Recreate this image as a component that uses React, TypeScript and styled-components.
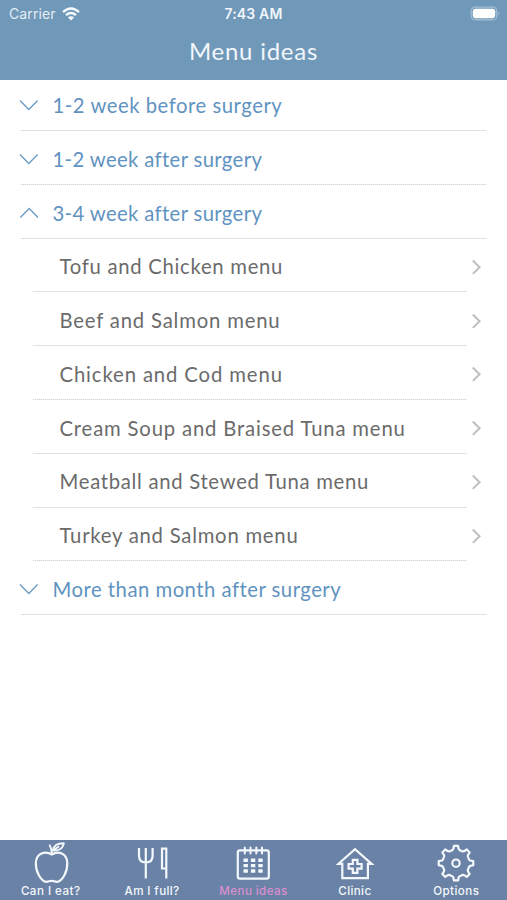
import React from 'react';
import styled, { createGlobalStyle } from 'styled-components';

const GlobalStyle = createGlobalStyle`
  * { box-sizing: border-box; }
  body { margin: 0; background: #fff; }
`;

const Screen = styled.div`
  width: 100%;
  max-width: 507px;
  height: 900px;
  display: flex;
  flex-direction: column;
  background: #fff;
  overflow: hidden;
  font-family: Lato, sans-serif;
`;

const Header = styled.header`
  height: 79.5px;
  flex: none;
  background: #7098b8;
  color: #f0f6fb;
`;

const StatusBar = styled.div`
  height: 27px;
  padding: 0 6px 0 9px;
  display: grid;
  grid-template-columns: 1fr auto 1fr;
  align-items: center;
  font: 400 14px/27px Inter, sans-serif;
`;

const Carrier = styled.div`
  display: flex;
  align-items: center;
  gap: 6px;
  color: #e3edf5;
  letter-spacing: 0.1px;
`;

const Clock = styled.div`
  position: relative;
  left: -1.5px;
  font-weight: 600;
  font-size: 14px;
  letter-spacing: 0.15px;
`;

const Battery = styled.svg`
  justify-self: end;
`;

const Title = styled.h1<{ $tracking: number }>`
  margin: 0;
  padding-top: 7px;
  text-align: center;
  font-weight: 400;
  font-size: 24px;
  line-height: 34px;
  letter-spacing: ${(p) => p.$tracking}px;
`;

const List = styled.main`
  flex: 1;
`;

const dots = 'repeating-linear-gradient(90deg, #d2d2d2 0 1px, #f0f0f0 1px 2px) no-repeat';

const Section = styled.div<{ $first?: boolean }>`
  height: ${(p) => (p.$first ? 51.5 : 53.8)}px;
  margin: 0 20px 0 21px;
  padding-bottom: ${(p) => (p.$first ? 0.4 : 0)}px;
  padding-top: ${(p) => (p.$first ? 0 : 1.9)}px;
  display: flex;
  align-items: center;
  background: ${dots} left bottom / 100% 1px;
  color: #5f93c1;
`;

const Item = styled.div`
  height: 53.8px;
  margin: 0 25px 0 33px;
  padding: 1.6px 0 0 26.5px;
  display: flex;
  align-items: center;
  justify-content: space-between;
  background: ${dots} left bottom / 434px 1px;
  color: #6b6b6b;
`;

const Chevron = styled.svg`
  flex: none;
  margin-top: 1px;
`;

const Label = styled.span<{ $tracking: number }>`
  font-size: 20.3px;
  line-height: 26px;
  white-space: nowrap;
  letter-spacing: ${(p) => p.$tracking}px;
`;

const Toggle = styled.svg<{ $open?: boolean }>`
  flex: none;
  margin: 0 13.5px 0 -2px;
  transform: ${(p) => (p.$open ? 'rotate(180deg)' : 'none')};
`;

const TabBar = styled.nav`
  height: 60.5px;
  flex: none;
  display: grid;
  grid-template-columns: repeat(5, 1fr);
  background: #6a82a5;
`;

const Tab = styled.div<{ $active?: boolean }>`
  display: flex;
  flex-direction: column;
  align-items: center;
  color: ${(p) => (p.$active ? '#d98fd0' : '#f3f8fd')};
`;

const TabIcon = styled.svg`
  width: 44px;
  height: 44px;
  flex: none;
  fill: none;
  stroke: #f3f8fd;
  stroke-width: 2.2;
  stroke-linejoin: round;
  stroke-linecap: round;
`;

const TabLabel = styled.span<{ $tracking: number }>`
  font: 500 11.6px/14px Inter, sans-serif;
  white-space: nowrap;
  letter-spacing: ${(p) => p.$tracking}px;
`;

type Entry = { text: string; tracking: number };

const before: Entry[] = [
  { text: '1-2 week before surgery', tracking: 0.52 },
  { text: '1-2 week after surgery', tracking: 0.36 },
];

const menus: Entry[] = [
  { text: 'Tofu and Chicken menu', tracking: 0.71 },
  { text: 'Beef and Salmon menu', tracking: 0.82 },
  { text: 'Chicken and Cod menu', tracking: 0.88 },
  { text: 'Cream Soup and Braised Tuna menu', tracking: 0.83 },
  { text: 'Meatball and Stewed Tuna menu', tracking: 0.7 },
  { text: 'Turkey and Salmon menu', tracking: 0.76 },
];

function SectionRow({ entry, open, first }: { entry: Entry; open?: boolean; first?: boolean }) {
  return (
    <Section $first={first}>
      <Toggle $open={open} width="20" height="12" viewBox="0 0 20 12" fill="none" stroke="#6b9bc4" strokeWidth="1.3">
        <path d="M1 1.5 9.8 10.5 18.6 1.5" />
      </Toggle>
      <Label $tracking={entry.tracking}>{entry.text}</Label>
    </Section>
  );
}

const gearPath = (() => {
  const at = (angle: number, r: number) =>
    `${(22 + r * Math.cos(angle)).toFixed(2)} ${(23.2 + r * Math.sin(angle)).toFixed(2)}`;
  let d = '';
  for (let i = 0; i < 8; i++) {
    const base = (i * Math.PI) / 4 - Math.PI / 2;
    d += `${i ? 'L' : 'M'}${at(base - 0.19, 14.4)}L${at(base - 0.12, 17.4)}L${at(base + 0.12, 17.4)}L${at(base + 0.19, 14.4)}`;
    d += `Q${at(base + 0.29, 12.9)} ${at(base + Math.PI / 8, 13.6)}`;
    d += `Q${at(base + Math.PI / 4 - 0.29, 12.9)} ${at(base + Math.PI / 4 - 0.19, 14.4)}`;
  }
  return `${d}Z`;
})();

const icons = {
  apple: (
    <>
      <path d="M22.8 14.5C16.500 10.500 7 13 6.800 23c-.1 9 5 17.500 9.700 18.700 2.300.5 3.700-.9 6-.9s4 1.400 6.300.9C33.500 40.700 38.500 32 38.300 23 38.100 13 29 10.500 22.800 14.500Z" />
      <path d="M22.800 14C22.800 10 22.200 7.500 20.700 5.200M24 10.500C24.500 5.500 28.500 3.200 34.800 3.200 34.100 8.500 29.500 11 24 10.500ZM24 10.500 29.500 6.800" strokeWidth="1.900" />
    </>
  ),
  cutlery: (
    <>
      <path d="M9 8V16Q9 22.500 15.800 22.500T22.600 16V8M15.800 8V38.500" strokeLinecap="butt" />
      <path d="M36.300 38.500V8.700H32V28.500H36.300" strokeLinejoin="miter" strokeLinecap="butt" />
    </>
  ),
  calendar: (
    <>
      <rect x="6.800" y="10.300" width="31" height="28.400" rx="2.200" />
      <path d="M13.800 7.500V13.500M19.500 7.500V13.500M25.300 7.500V13.500M31 7.500V13.500" strokeWidth="2" />
      <path d="M12.500 20.200H32M12.500 25.600H32M12.500 31H32" strokeWidth="3.400" strokeDasharray="4.400 3" strokeLinecap="butt" />
    </>
  ),
  clinic: (
    <>
      <path d="M9.300 38.200V23.800H5.500L22 9.200 38.700 23.800H34.900V38.200Z" strokeLinejoin="miter" />
      <path d="M19.800 19.800h4.600v4.200h4.200v4.600h-4.200v4.200h-4.600v-4.200h-4.200v-4.600h4.200Z" strokeLinejoin="miter" />
    </>
  ),
  gear: (
    <>
      <path d={gearPath} />
      <circle cx="22" cy="23.200" r="3.700" />
    </>
  ),
};

const tabs: { icon: keyof typeof icons; text: string; tracking: number; active?: boolean }[] = [
  { icon: 'apple', text: 'Can I eat?', tracking: 0.46 },
  { icon: 'cutlery', text: 'Am I full?', tracking: 0.38 },
  { icon: 'calendar', text: 'Menu ideas', tracking: 0.4, active: true },
  { icon: 'clinic', text: 'Clinic', tracking: 0.36 },
  { icon: 'gear', text: 'Options', tracking: 0.45 },
];

export default function App() {
  return (
    <Screen>
      <GlobalStyle />
      <Header>
        <StatusBar>
          <Carrier>
            Carrier
            <svg width="18" height="14" viewBox="0 0 18 14" fill="none" stroke="#f7fbff" strokeWidth="2.400">
              <path d="M1 5.100Q9-2 17 5.100M4 8.200Q9 3.900 14 8.200" />
              <path d="M5.900 10.300Q9 8 12.100 10.300L9 13.500Z" fill="#f7fbff" stroke="none" />
            </svg>
          </Carrier>
          <Clock>7:43 AM</Clock>
          <Battery width="31" height="15" viewBox="0 0 31 15">
            <rect x="1.200" y="1.200" width="25.600" height="12.600" rx="3.800" fill="none" stroke="#a3bfd6" strokeWidth="1.200" />
            <rect x="2.800" y="2.800" width="22.400" height="9.400" rx="2.400" fill="#fff" />
            <path d="M28.300 5.300Q30.300 7.500 28.300 9.700Z" fill="#a3bfd6" />
          </Battery>
        </StatusBar>
        <Title $tracking={0.75}>Menu ideas</Title>
      </Header>
      <List>
        {before.map((entry, i) => (
          <SectionRow key={entry.text} entry={entry} first={i === 0} />
        ))}
        <SectionRow entry={{ text: '3-4 week after surgery', tracking: 0.36 }} open />
        {menus.map((entry) => (
          <Item key={entry.text}>
            <Label $tracking={entry.tracking}>{entry.text}</Label>
            <Chevron width="11" height="16" viewBox="0 0 11 16" fill="none" stroke="#bfbfbf" strokeWidth="2">
              <path d="M1.800 1.500 8.600 8.200 1.800 14.900" />
            </Chevron>
          </Item>
        ))}
        <SectionRow entry={{ text: 'More than month after surgery', tracking: 0.49 }} />
      </List>
      <TabBar>
        {tabs.map((tab) => (
          <Tab key={tab.text} $active={tab.active}>
            <TabIcon viewBox="0 0 44 44">{icons[tab.icon]}</TabIcon>
            <TabLabel $tracking={tab.tracking}>{tab.text}</TabLabel>
          </Tab>
        ))}
      </TabBar>
    </Screen>
  );
}
